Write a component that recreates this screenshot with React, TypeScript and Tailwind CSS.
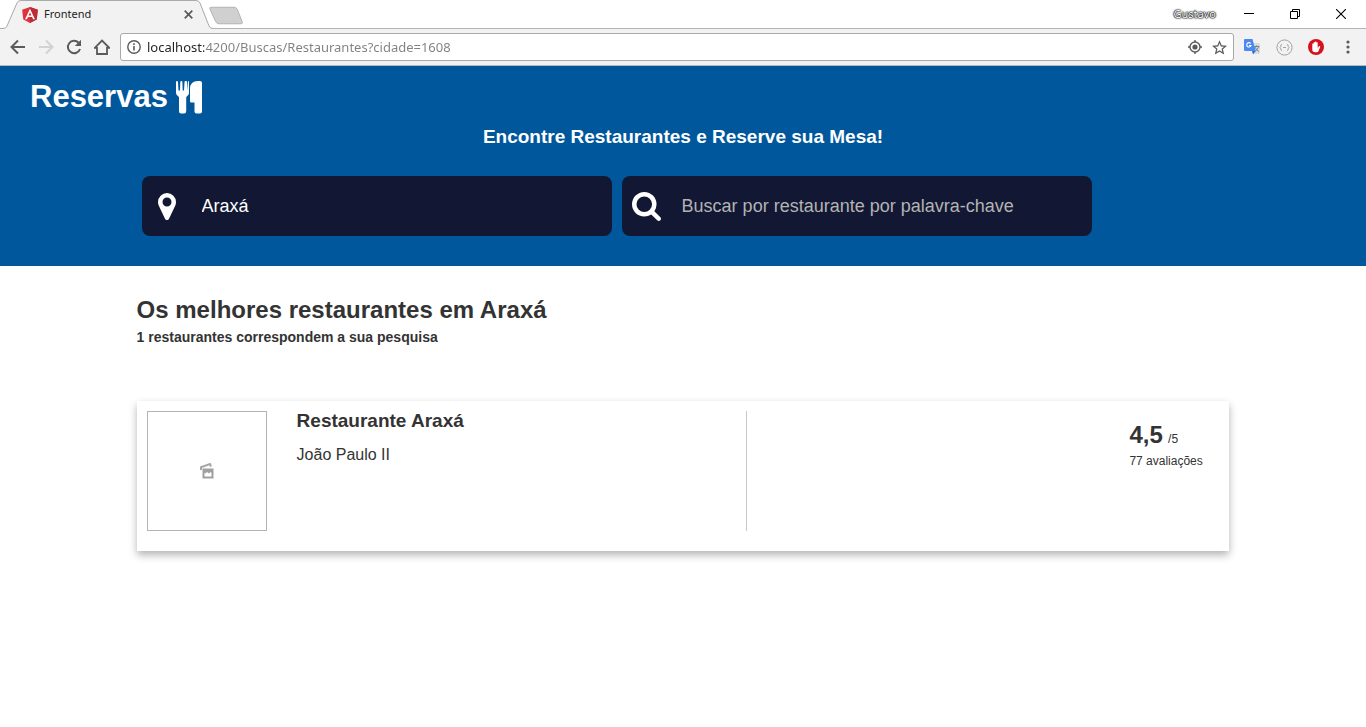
import React, { useState } from 'react';

const uiFont = "font-['Noto_Sans',sans-serif]";

function AngularLogo() {
  return (
    <svg width="16" height="18" viewBox="10 8 230 236" aria-hidden="true" className="shrink-0">
      <path fill="#e0323c" d="M125 10 12 50l17 142 96 50 96-50 17-142z" />
      <path fill="#bd2c36" d="M125 10v232l96-50 17-142z" />
      <path fill="#fff" d="M125 36 54 188h27l14-35h60l14 35h27zm0 52 20 44h-40z" />
    </svg>
  );
}

function TabStrip() {
  return (
    <div className="relative flex h-[29px] items-stretch border-b border-[#b4b4b4] bg-white">
      <div className="relative h-[29px] w-[213px] shrink-0">
        <svg viewBox="0 0 213 29" className="absolute inset-0 h-[29px] w-[213px]" aria-hidden="true">
          <path d="M0 28.5H3Q6 28.5 7 26L17 3Q18 .5 21 .5H196Q199 .5 200 3L209 26Q210 28.5 213 28.5V29H0z" fill="#f2f2f2" />
          <path d="M0 28.5H3Q6 28.5 7 26L17 3Q18 .5 21 .5H196Q199 .5 200 3L209 26Q210 28.5 213 28.5" fill="none" stroke="#a9a9a9" />
        </svg>
        <div className="relative flex h-[29px] items-center pr-5 pl-[22px]">
          <AngularLogo />
          <span className="ml-1.5 flex-1 text-[11px] text-[#222]">Frontend</span>
          <button type="button" aria-label="Fechar guia" className="p-0">
            <svg width="9" height="9" viewBox="0 0 9 9" aria-hidden="true">
              <path d="m.7.7 7.600 7.600M8.300.7.7 8.300" stroke="#5a5a5a" strokeWidth="1.700" />
            </svg>
          </button>
        </div>
      </div>
      <button type="button" aria-label="Nova guia" className="-ml-1 self-start pt-1.5">
        <svg width="35" height="19" viewBox="0 0 36 19" aria-hidden="true">
          <path d="M2.500 1H26Q28 1 29 3L34 15.500Q35 18 33 18H10Q8 18 7 16L1 3Q0 1 2.500 1z" fill="#d0d0d0" stroke="#b2b2b2" />
        </svg>
      </button>
      <div className="ml-auto flex items-center">
        <span className="mr-3 text-[11px] text-white [text-shadow:0_0_1px_#000,0_0_1px_#000,0_0_2px_#333,0_0_2px_#333]">Gustavo</span>
        <button type="button" aria-label="Minimizar" className="flex w-[46px] justify-center pr-1">
          <svg width="10" height="10" viewBox="0 0 10 10" aria-hidden="true"><path d="M0 4.500h10" stroke="#000" /></svg>
        </button>
        <button type="button" aria-label="Restaurar" className="flex w-[46px] justify-center pr-1">
          <svg width="10" height="10" viewBox="0 0 10 10" aria-hidden="true"><path d="M.5 2.500h7v7h-7zM2.500 2.500v-2h7v7h-2" fill="none" stroke="#000" /></svg>
        </button>
        <button type="button" aria-label="Fechar" className="flex w-[46px] justify-center pr-1">
          <svg width="10" height="10" viewBox="0 0 10 10" aria-hidden="true"><path d="m0 0 10 10M10 0 0 10" stroke="#000" strokeWidth="1.100" /></svg>
        </button>
      </div>
    </div>
  );
}

function Toolbar() {
  const [url, setUrl] = useState('localhost:4200/Buscas/Restaurantes?cidade=1608');
  return (
    <div className="flex h-[37px] items-center border-b border-[#b9b9b9] bg-[#f2f2f2] pr-4 pl-2.5">
      <div className="flex items-center gap-3">
        <button type="button" aria-label="Voltar">
          <svg width="16" height="16" viewBox="0 0 16 16" fill="none" stroke="#5a5a5a" strokeWidth="2" aria-hidden="true"><path d="M15 8H2.500M8 1.500 1.500 8 8 14.500" /></svg>
        </button>
        <button type="button" aria-label="Avançar">
          <svg width="16" height="16" viewBox="0 0 16 16" fill="none" stroke="#d2d2d2" strokeWidth="2" aria-hidden="true"><path d="M1 8h12.500M8 1.500 14.500 8 8 14.500" /></svg>
        </button>
        <button type="button" aria-label="Recarregar">
          <svg width="16" height="16" viewBox="0 0 16 16" aria-hidden="true">
            <path d="M12.600 3.700A6.200 6.200 0 1 0 14 10" fill="none" stroke="#5a5a5a" strokeWidth="2" />
            <path d="M15 .8V7H8.800z" fill="#5a5a5a" />
          </svg>
        </button>
        <button type="button" aria-label="Página inicial">
          <svg width="16" height="16" viewBox="0 0 16 16" fill="none" stroke="#5a5a5a" strokeWidth="1.800" aria-hidden="true"><path d="M.8 8.800 8 1.500l7.200 7.300H13V15H3V8.800z" /></svg>
        </button>
      </div>
      <div className="ml-2.5 flex h-7 flex-1 items-center rounded-[3px] border border-[#a9a9a9] bg-white px-1.5">
        <svg width="14" height="14" viewBox="0 0 14 14" aria-hidden="true" className="shrink-0">
          <circle cx="7" cy="7" r="6.200" fill="none" stroke="#5a5a5a" strokeWidth="1.400" />
          <path d="M6.200 6h1.600v4.500H6.200zM6.200 3.300h1.600v1.600H6.200z" fill="#5a5a5a" />
        </svg>
        <input
          aria-label="Endereço"
          value={url}
          onChange={(e) => setUrl(e.target.value)}
          className="ml-1.5 min-w-0 flex-1 bg-[linear-gradient(to_right,#222_57px,#808080_57px)] bg-clip-text pt-px text-[13px] text-transparent outline-none"
        />
        <button type="button" aria-label="Localização">
          <svg width="14" height="14" viewBox="0 0 14 14" aria-hidden="true">
            <circle cx="7" cy="7" r="5" fill="none" stroke="#5a5a5a" strokeWidth="1.400" />
            <circle cx="7" cy="7" r="2.600" fill="#5a5a5a" />
            <path d="M7 0v2M7 12v2M0 7h2M12 7h2" stroke="#5a5a5a" strokeWidth="1.400" />
          </svg>
        </button>
        <button type="button" aria-label="Adicionar aos favoritos" className="ml-2.5">
          <svg width="15" height="15" viewBox="0 0 24 24" fill="#5a5a5a" aria-hidden="true">
            <path d="m24 9.100-8.600-.7L12 .5 8.600 8.400 0 9.100l6.500 5.700-2 8.400L12 18.800l7.500 4.400-2-8.400zM12 16.500l-4.500 2.700 1.200-5.100-4-3.500 5.200-.4L12 5.300l2.100 4.900 5.200.4-4 3.500 1.200 5.100z" />
          </svg>
        </button>
      </div>
      <div className="flex items-center pl-2.5">
        <button type="button" aria-label="Tradutor">
          <svg width="16" height="16" viewBox="0 0 16 16" aria-hidden="true">
            <path d="M6 4h9q1 0 1 1v9q0 1-1 1H9z" fill="#dcdcdc" />
            <path d="M10 7.500h5.500M12.700 6.300v1.200M11 8q1 3 4 4.500M14.500 8q-1 3-4 4.500" fill="none" stroke="#6b8a96" />
            <path d="M1 0h7.500l3.200 12H1q-1 0-1-1V1q0-1 1-1z" fill="#4a89f3" />
            <path d="M8 12h3.700L9 15.500z" fill="#3367d6" />
            <path d="M6.700 4.500A2.200 2.200 0 1 0 7 6.500H5" fill="none" stroke="#fff" strokeWidth="1.100" />
          </svg>
        </button>
        <button type="button" aria-label="Visualizador JSON" className="ml-4">
          <svg width="17" height="17" viewBox="0 0 17 17" fill="none" stroke="#a0a0a0" aria-hidden="true">
            <circle cx="8.500" cy="8.500" r="7.600" />
            <path d="M6 5.500q-1.200 0-1.200 1.300T4 8.500q.8.400.8 1.700T6 11.500M11 5.500q1.200 0 1.200 1.300T13 8.500q-.8.400-.8 1.700T11 11.500M7 8.500h3" />
          </svg>
        </button>
        <button type="button" aria-label="Bloqueador de anúncios" className="ml-[15px]">
          <svg width="16" height="16" viewBox="0 0 16 16" aria-hidden="true">
            <circle cx="8" cy="8" r="8" fill="#d5121e" />
            <path d="M4.300 8.500V4.800q.7-.8 1.300 0V3.600q.7-.8 1.300 0v-.8q.7-.8 1.400 0v.8q.7-.8 1.400 0V9l1.200-1.700q.9-.6 1.400.2L10.600 12q-.7 1.200-2 1.200H7.200Q4.300 13.200 4.300 10.500z" fill="#fff" />
          </svg>
        </button>
        <button type="button" aria-label="Menu" className="ml-[22px]">
          <svg width="4" height="14" viewBox="0 0 4 14" fill="#5a5a5a" aria-hidden="true">
            <circle cx="2" cy="2" r="1.600" /><circle cx="2" cy="7" r="1.600" /><circle cx="2" cy="12" r="1.600" />
          </svg>
        </button>
      </div>
    </div>
  );
}

function Cutlery() {
  return (
    <svg width="26" height="33" viewBox="0 0 26 33" fill="#fff" aria-hidden="true">
      <path d="M0 1.200Q0 0 1 0t1 1.200L2.500 9.500H4L4.300 1.200Q4.400 0 5.200 0h.3q.8 0 .9 1.200L6.700 9.500H8L8.500 1.200Q8.600 0 9.400 0h.8Q11 0 11.100 1.200L11.500 9.500 12 1.200Q12 0 12.500 0T13 1.200V12q0 2-2 3.200-.8.500-.8 1.600V30q0 2.500-2 2.500H5Q3 32.500 3 30V16.800q0-1.100-.8-1.600Q0 14 0 12z" />
      <path d="M14 8Q14 0 22 0h2q2 0 2 2v28.500q0 2-2 2h-3.500q-2 0-2-2V21.500H15.200Q14 21.500 14 20.300z" />
    </svg>
  );
}

function Pin() {
  return (
    <svg width="18" height="27" viewBox="384 128 1024 1536" fill="#fff" aria-hidden="true">
      <path d="M1152 640q0-106-75-181t-181-75-181 75-75 181 75 181 181 75 181-75 75-181zm256 0q0 109-33 179l-364 774q-16 33-47.500 52t-67.500 19-67.500-19-46.500-52l-365-774q-33-70-33-179 0-212 150-362t362-150 362 150 150 362z" />
    </svg>
  );
}

function Magnifier() {
  return (
    <svg width="29" height="29" viewBox="0 128 1664 1664" fill="#fff" aria-hidden="true">
      <path d="M1152 832q0-185-131.500-316.500t-316.500-131.500-316.500 131.500-131.500 316.500 131.500 316.500 316.500 131.500 316.500-131.500 131.500-316.500zm512 832q0 52-38 90t-90 38q-54 0-90-38l-343-342q-179 124-399 124-143 0-273.500-55.500t-225-150-150-225-55.500-273.500 55.500-273.500 150-225 225-150 273.500-55.500 273.500 55.500 225 150 150 225 55.500 273.500q0 220-124 399l343 343q37 37 37 90z" />
    </svg>
  );
}

type SearchBoxProps = { id: string; label: string; icon: React.ReactNode; initial?: string; placeholder?: string };

function SearchBox({ id, label, icon, initial = '', placeholder }: SearchBoxProps) {
  const [value, setValue] = useState(initial);
  return (
    <div className="flex h-[60px] max-w-[470px] flex-1 items-center rounded-lg bg-[#121833]">
      <label htmlFor={id} aria-label={label} className="flex w-[50px] shrink-0 justify-center">{icon}</label>
      <input
        id={id}
        value={value}
        placeholder={placeholder}
        onChange={(e) => setValue(e.target.value)}
        className="ml-2.5 min-w-0 flex-1 bg-transparent text-[18px] text-white outline-none placeholder:text-[#b3b3b3]"
      />
    </div>
  );
}

function Header() {
  return (
    <header className="bg-[#00579c] pb-[30px] text-white">
      <h1 className="flex items-center gap-2 pt-[13px] pl-[30px] text-[31px] leading-9 font-bold">
        Reservas <Cutlery />
      </h1>
      <h2 className="pt-2.5 text-center text-[19px] leading-6 font-bold">Encontre Restaurantes e Reserve sua Mesa!</h2>
      <form className="mx-auto mt-[27px] flex w-4/5 gap-2.5 pl-[5px]" onSubmit={(e) => e.preventDefault()}>
        <SearchBox id="cidade" label="Cidade" icon={<Pin />} initial="Araxá" />
        <SearchBox id="palavra" label="Palavra-chave" icon={<Magnifier />} placeholder="Buscar por restaurante por palavra-chave" />
      </form>
    </header>
  );
}

function RestaurantCard() {
  return (
    <article className="mt-[54px] flex bg-white px-2.5 pt-2.5 pb-5 shadow-[0_4px_8px_0_rgba(0,0,0,0.3)]">
      <div className="flex w-[56%] border-r border-[#c8c8c8]">
        <div className="flex size-[120px] shrink-0 items-center justify-center border border-[#b3b3b3]">
          <svg width="14" height="16" viewBox="0 0 14 16" aria-hidden="true">
            <path d="M1.200 7 .8 4.200 10 1l1 2.700" fill="none" stroke="#a6a6a6" strokeWidth="2" />
            <path d="M3.500 6.500h9v8h-9z" fill="#fff" stroke="#a0a0a0" strokeWidth="2" />
            <path d="M4 7h8v3l-1.500-1L9 10.500 7 9l-1.500 1.500L4 9.500z" fill="#a0a0a0" />
          </svg>
        </div>
        <div className="ml-[30px]">
          <h3 className="text-[19px] leading-5 font-bold">Restaurante Araxá</h3>
          <p className="mt-3 text-[16px] leading-6">João Paulo II</p>
        </div>
      </div>
      <div className="ml-auto w-[90px] pt-2.5 text-[12px]">
        <p className="leading-7"><strong className="mr-0.5 text-[24px]">4,5</strong> /5</p>
        <p className="leading-4">77 avaliações</p>
      </div>
    </article>
  );
}

export default function App() {
  return (
    <div className="min-h-screen bg-white">
      <div className={uiFont}>
        <TabStrip />
        <Toolbar />
      </div>
      <div className="font-['Liberation_Sans',Arial,sans-serif] text-[#333]">
        <Header />
        <main className="mx-auto w-4/5 pt-[30px] pb-10">
          <h2 className="text-[24px] leading-7 font-bold">Os melhores restaurantes em Araxá</h2>
          <p className="mt-[3px] text-[14px] leading-5 font-bold">1 restaurantes correspondem a sua pesquisa</p>
          <RestaurantCard />
        </main>
      </div>
    </div>
  );
}
